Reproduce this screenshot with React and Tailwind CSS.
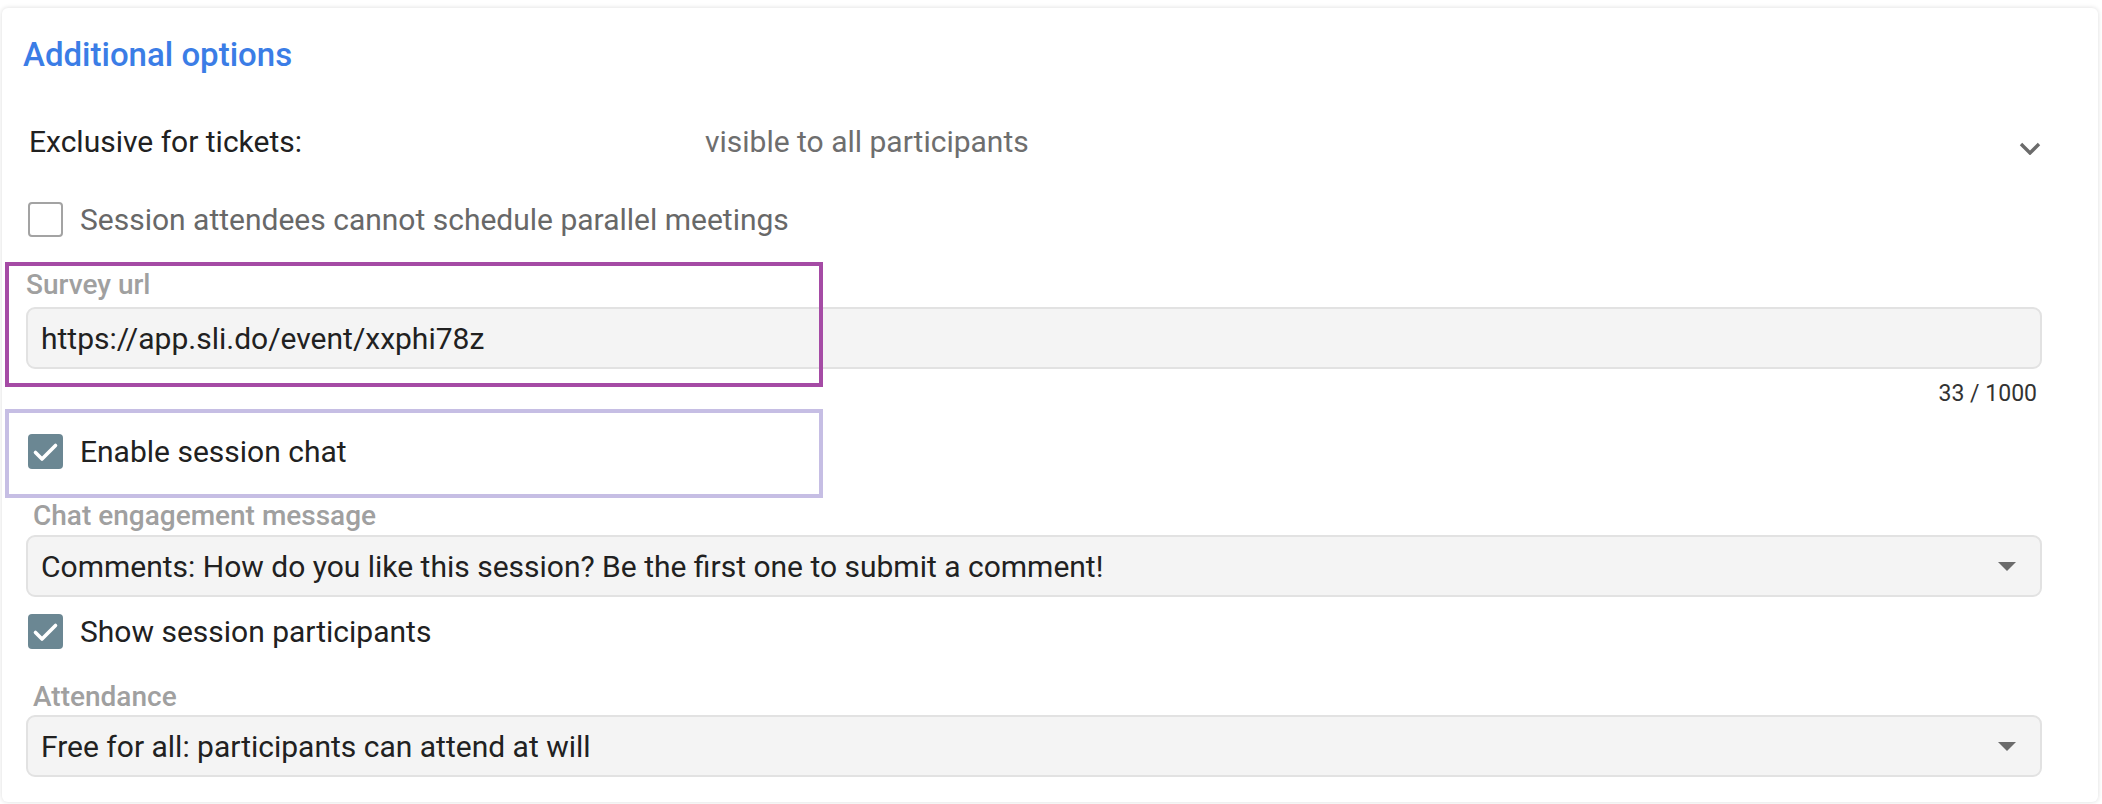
import React from 'react'

const font = "font-['Roboto','Liberation_Sans',sans-serif]"

function Checkbox({ checked }) {
  if (!checked) {
    return <span className="block w-[35px] h-[35px] rounded-[4px] border-2 border-[#a3a3a3] bg-white flex-shrink-0" />
  }
  return (
    <span className="flex w-[35px] h-[35px] rounded-[4px] bg-[#6b8793] items-center justify-center flex-shrink-0">
      <svg width="35" height="35" viewBox="0 0 35 35" fill="none">
        <polyline points="7.5,18.5 14,25 27.5,11.5" stroke="#fff" strokeWidth="3.6" strokeLinecap="round" strokeLinejoin="round" />
      </svg>
    </span>
  )
}

function CheckRow({ checked, label, muted, className = '' }) {
  return (
    <div className={`flex items-center h-[35px] ml-[5px] gap-[17px] ${className}`}>
      <Checkbox checked={checked} />
      <span className={`text-[30px] leading-[35px] ${muted ? 'text-[#686868]' : 'text-[#212121]'}`}>{label}</span>
    </div>
  )
}

function Caret() {
  return (
    <svg width="18" height="9" viewBox="0 0 18 9" className="flex-shrink-0">
      <polygon points="0,0 18,0 9,9" fill="#6b6b6b" />
    </svg>
  )
}

function SelectBox({ value, className = '' }) {
  return (
    <div className={`flex items-center h-[62px] rounded-[9px] border-2 border-[#e2e2e2] bg-[#f4f4f4] pl-[13px] pr-[24px] ${className}`}>
      <span className="flex-1 text-[30px] leading-[35px] text-[#212121] truncate">{value}</span>
      <Caret />
    </div>
  )
}

export default function App() {
  return (
    <div className={`w-[2102px] h-[804px] bg-white pl-[2px] pt-[8px] overflow-hidden ${font}`}>
      <div className="relative w-[2096px] bg-white rounded-[6px] shadow-[0_0_5px_rgba(0,0,0,0.14)] pl-[21px] pr-[56px] pt-[27px] pb-[25px] flex flex-col">
        {/* Header */}
        <h2 className="text-[33px] leading-[40px] font-medium text-[#3b7de6]">Additional options</h2>

        {/* Ticket visibility */}
        <div className="flex items-start mt-[49px] ml-[6px]">
          <span className="w-[676px] text-[30px] leading-[35px] text-[#212121]">Exclusive for tickets:</span>
          <span className="text-[30px] leading-[35px] text-[#6e6e6e]">visible to all participants</span>
          <svg width="22" height="13" viewBox="0 0 22 13" className="ml-auto mr-[1px] mt-[18px]" fill="none">
            <polyline points="2,2 11,11 20,2" stroke="#6b6b6b" strokeWidth="3.4" />
          </svg>
        </div>

        <CheckRow label="Session attendees cannot schedule parallel meetings" muted className="mt-[43px]" />

        {/* Survey url */}
        <label className="mt-[31px] ml-[3px] text-[28px] leading-[33px] font-medium text-[#a0a0a0]">Survey url</label>
        <div className="mt-[6px] ml-[3px] flex items-center h-[62px] rounded-[9px] border-2 border-[#e2e2e2] bg-[#f4f4f4] pl-[13px]">
          <span className="text-[30px] leading-[35px] text-[#212121]">https://app.sli.do/event/xxphi78z</span>
        </div>
        <div className="mt-[11px] self-end mr-[5px] text-[23px] leading-[27px] text-[#333]">33 / 1000</div>

        <CheckRow checked label="Enable session chat" className="mt-[27px]" />

        {/* Chat engagement */}
        <label className="mt-[30px] ml-[10px] text-[28px] leading-[33px] font-medium text-[#a0a0a0]">Chat engagement message</label>
        <SelectBox className="mt-[3px] ml-[3px]" value="Comments: How do you like this session? Be the first one to submit a comment!" />

        <CheckRow checked label="Show session participants" className="mt-[17px]" />

        {/* Attendance */}
        <label className="mt-[31px] ml-[10px] text-[28px] leading-[33px] font-medium text-[#a0a0a0]">Attendance</label>
        <SelectBox className="mt-[2px] ml-[3px]" value="Free for all: participants can attend at will" />

        {/* Annotation highlights */}
        <div className="absolute left-[3px] top-[254px] w-[818px] h-[125px] border-4 border-[#a54ba5] pointer-events-none" />
        <div className="absolute left-[3px] top-[401px] w-[818px] h-[89px] border-4 border-[#c6bee4] pointer-events-none" />
      </div>
    </div>
  )
}
